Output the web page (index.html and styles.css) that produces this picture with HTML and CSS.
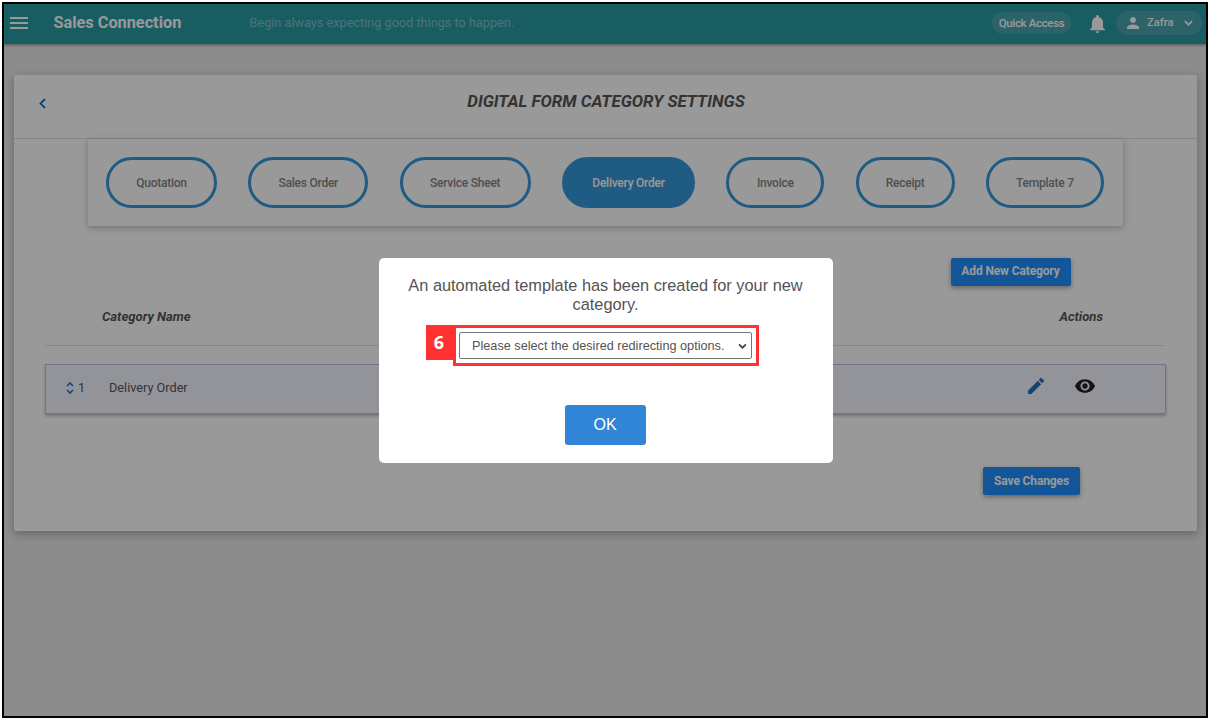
FILE: index.html
```html
<!DOCTYPE html>
<html lang="en">
<head>
<meta charset="utf-8">
<title>Digital Form Category Settings</title>
<link rel="stylesheet" href="styles.css">
</head>
<body>
<div class="frame">
  <header class="topbar">
    <svg class="menu" viewBox="0 0 18 12"><path d="M0 1h18M0 6h18M0 11h18" stroke="#fff" stroke-width="2"/></svg>
    <span class="brand"><span class="t">Sales Connection</span></span>
    <span class="motto"><span class="t">Begin always expecting good things to happen.</span></span>
    <span class="quick"><span class="t">Quick Access</span></span>
    <svg class="bell" viewBox="4 2.5 16 19.5"><path fill="#fff" d="M12 22c1.1 0 2-.9 2-2h-4c0 1.1.89 2 2 2zm6-6v-5c0-3.070-1.640-5.640-4.500-6.320V4c0-.83-.67-1.500-1.500-1.500s-1.500.67-1.500 1.500v.68C7.630 5.360 6 7.920 6 11v5l-2 2v1h16v-1l-2-2z"/></svg>
    <span class="user">
      <svg class="person" viewBox="4 4 16 16"><path fill="#fff" d="M12 12c2.210 0 4-1.790 4-4s-1.790-4-4-4-4 1.790-4 4 1.790 4 4 4zm0 2c-2.670 0-8 1.340-8 4v2h16v-2c0-2.660-5.330-4-8-4z"/></svg>
      <span class="t">Zafra</span>
      <svg class="caret" viewBox="0 0 10 6"><path d="M1 1l4 4 4-4" fill="none" stroke="#fff" stroke-width="1.900"/></svg>
    </span>
  </header>

  <main class="card">
    <div class="card-head">
      <svg class="back" viewBox="0 0 7 11"><path d="M6 1L1.500 5.500 6 10" fill="none" stroke="#1d6fc0" stroke-width="1.800"/></svg>
      <h1><span class="t">DIGITAL FORM CATEGORY SETTINGS</span></h1>
    </div>
    <nav class="tabs">
      <span class="tab w1"><span class="t">Quotation</span></span>
      <span class="tab w2"><span class="t">Sales Order</span></span>
      <span class="tab w3"><span class="t">Service Sheet</span></span>
      <span class="tab w4 active"><span class="t">Delivery Order</span></span>
      <span class="tab w5"><span class="t">Invoice</span></span>
      <span class="tab w6"><span class="t">Receipt</span></span>
      <span class="tab w7"><span class="t">Template 7</span></span>
    </nav>
    <div class="btn add"><span class="t">Add New Category</span></div>
    <div class="thead"><span class="t">Category Name</span><span class="t">Actions</span></div>
    <div class="row">
      <svg class="sort" viewBox="0 0 8 12"><path d="M1 4l3-3 3 3M1 8l3 3 3-3" fill="none" stroke="#1d6fc0" stroke-width="1.500"/></svg>
      <span class="num t">1</span>
      <span class="name"><span class="t">Delivery Order</span></span>
      <svg class="pencil" viewBox="3 3 18 18"><path fill="#2070b8" d="M3 17.250V21h3.750L17.810 9.940l-3.750-3.750L3 17.250zM20.710 7.040c.39-.39.39-1.020 0-1.410l-2.340-2.340c-.39-.39-1.020-.39-1.410 0l-1.830 1.830 3.750 3.750 1.830-1.830z"/></svg>
      <svg class="eye" viewBox="1 4.500 22 15"><path fill="#222" d="M12 4.500C7 4.500 2.730 7.610 1 12c1.730 4.390 6 7.500 11 7.500s9.270-3.110 11-7.500c-1.730-4.390-6-7.500-11-7.500zM12 17c-2.760 0-5-2.240-5-5s2.240-5 5-5 5 2.240 5 5-2.240 5-5 5zm0-8c-1.660 0-3 1.340-3 3s1.340 3 3 3 3-1.340 3-3-1.340-3-3-3z"/></svg>
    </div>
    <div class="btn save"><span class="t">Save Changes</span></div>
  </main>

  <div class="overlay">
    <section class="modal">
      <p>An automated template has been created for your new category.</p>
      <div class="step">
        <span class="badge">6</span>
        <div class="highlight">
          <div class="select"><span class="t">Please select the desired redirecting options.</span>
            <svg class="arrow" viewBox="0 0 10 7"><path d="M1 1.500l4 4 4-4" fill="none" stroke="#444" stroke-width="2"/></svg>
          </div>
        </div>
      </div>
      <div class="ok">OK</div>
    </section>
  </div>
</div>
</body>
</html>
```
FILE: styles.css
```css
* { box-sizing: border-box; }
body { margin: 0; padding: 2px; width: 1210px; height: 720px; overflow: hidden; background: #fff; font-family: Roboto, sans-serif; }
.t { white-space: nowrap; }
svg { display: block; flex: none; }
.frame { position: relative; width: 1206px; height: 716px; border: 2px solid #000; background: #e9e9e9; overflow: hidden; }

.topbar { display: flex; align-items: center; height: 40px; padding: 0 4px 3px 6px; background: #289ba3; color: #fff; box-shadow: 0 1px 3px rgba(0,0,0,.4); }
.menu { width: 18px; height: 12px; margin-top: 1px; }
.brand { width: 196px; margin-left: 25.5px; font-size: 16.3px; font-weight: 700; }
.motto { flex: 1; color: #7cc4c9; font-size: 12.7px; }
.quick { display: flex; align-items: center; justify-content: center; width: 79px; height: 22px; border-radius: 11px; background: #49a5ad; font-size: 11.4px; font-weight: 500; letter-spacing: -.28px; }
.bell { width: 15px; height: 18px; margin: 3px 11px 0 19px; }
.user { display: flex; align-items: center; width: 86px; height: 24px; padding-left: 11px; border-radius: 12px; background: #49a5ad; font-size: 11.2px; font-weight: 500; }
.person { width: 12px; height: 12px; margin: 1px 8px 0 0; }
.caret { width: 9px; height: 6px; margin: 1px 0 0 10px; }

.card { width: 1183px; height: 456px; margin: 31px 0 0 10px; background: #fff; border-radius: 2px; box-shadow: 0 3px 8px rgba(0,0,0,.28); }
.card-head { display: flex; align-items: center; height: 64px; padding: 0 0 11px 25px; border-bottom: 1px solid #ddd; }
.back { width: 7px; height: 11px; margin-top: 5px; }
h1 { flex: 1; margin: 0; padding: 0 31px 1px 0; text-align: center; color: #555; font-size: 16.85px; font-style: italic; font-weight: 700; }
.tabs { display: flex; justify-content: space-between; align-items: center; width: 1035px; height: 87px; margin-left: 74px; padding: 0 19px 0 18px; border-radius: 2px; background: #fff; box-shadow: 0 2px 7px rgba(0,0,0,.25); }
.tab { display: flex; align-items: center; justify-content: center; height: 51px; border: 3px solid #3498db; border-radius: 26px; color: #858585; font-size: 12px; font-weight: 500; letter-spacing: -.24px; padding-top: 1px; }
.active { background: #3498db; color: #fff; }
.w1 { width: 111px; }
.w2 { width: 120px; }
.w3 { width: 131px; }
.w4 { width: 133px; }
.w5 { width: 98px; }
.w6 { width: 99px; }
.w7 { width: 118px; }
.btn { display: flex; align-items: center; justify-content: center; height: 28px; border-radius: 2px; background: #1e90ff; color: #fff; font-size: 12px; font-weight: 700; letter-spacing: -.12px; box-shadow: 0 2px 5px rgba(0,0,0,.35); }
.add { width: 120px; margin: 32px 0 0 936.5px; padding-bottom: 2px; }
.thead { display: flex; justify-content: space-between; align-items: center; width: 1120px; height: 60px; margin-left: 31px; padding: 1px 62px 0 57px; border-bottom: 1px solid #e2e2e2; color: #555; font-size: 13.1px; font-style: italic; font-weight: 700; }
.row { display: flex; align-items: center; width: 1121px; height: 50px; margin: 18px 0 0 31px; padding: 0 0 3px 20px; border: 1px solid #b8c4e0; background: #f5f7ff; color: #555; font-size: 12.7px; box-shadow: 0 2px 3px rgba(0,0,0,.25); }
.sort { width: 8px; height: 12px; }
.num { width: 35px; padding-left: 4px; }
.name { width: 919px; }
.pencil { width: 16px; height: 16px; margin-top: -4px; }
.eye { width: 20px; height: 14px; margin: -4px 0 0 31px; }
.save { width: 97px; margin: 53px 0 0 969px; }

.overlay { position: absolute; inset: 0; display: flex; align-items: center; justify-content: center; background: rgba(0,0,0,.4); }
.modal { width: 454px; height: 205px; margin-top: 1px; margin-left: 1px; padding-top: 17.500px; border-radius: 5px; background: #fff; color: #545454; font-family: "Liberation Sans", Arial, sans-serif; }
.modal p { margin: 0 24px; text-align: center; font-size: 16.35px; line-height: 19px; }
.step { display: flex; align-items: flex-start; margin: 11.500px 0 0 47px; }
.badge { width: 27px; height: 35px; background: #ff3131; color: #fff; font-family: "Open Sans", sans-serif; font-size: 18px; font-weight: 700; line-height: 35px; text-align: center; }
.highlight { width: 306px; height: 41px; padding: 4px 3px; border: 3px solid #ff3131; }
.select { display: flex; align-items: center; justify-content: space-between; width: 293px; height: 27px; padding: 0 4px 0 12.5px; border: 1px solid #767676; border-radius: 2px; font-size: 12.7px; }
.arrow { width: 9px; height: 6px; }
.ok { width: 81px; height: 40px; margin: 39px 0 0 186px; border-radius: 3px; background: #3085d6; color: #fff; font-size: 16px; line-height: 39px; text-align: center; }
```
